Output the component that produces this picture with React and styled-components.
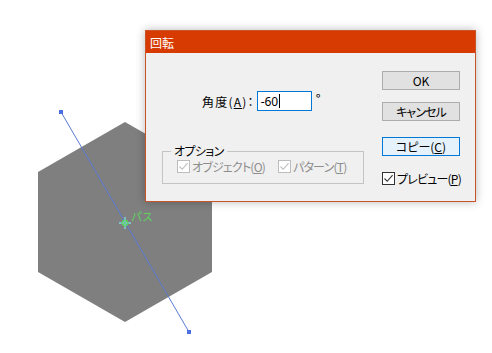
import React from 'react';
import styled, { createGlobalStyle } from 'styled-components';

const GlobalStyle = createGlobalStyle`
  html, body {
    margin: 0;
    padding: 0;
    background: #fff;
  }
`;

const Canvas = styled.div`
  position: relative;
  width: 492px;
  height: 353px;
  overflow: hidden;
  background: #fff;
`;

const Artwork = styled.svg`
  display: block;
`;

const Dialog = styled.div`
  position: absolute;
  left: 145px;
  top: 30px;
  width: 331px;
  height: 172px;
  box-sizing: border-box;
  border: 1px solid #c8552a;
  background: #f0f0f0;
  box-shadow: 0 0 9px rgba(0, 0, 0, 0.28);
  display: flex;
  flex-direction: column;
  font-family: "Noto Sans CJK JP", "Noto Sans", sans-serif;
  font-feature-settings: "palt" 1;
  font-size: 12px;
  color: #000;
`;

const TitleBar = styled.div`
  height: 22px;
  background: #d83b01;
  color: #fff;
  display: flex;
  align-items: center;
  padding-left: 4px;
  font-size: 12px;
`;

const Body = styled.div`
  flex: 1;
  display: grid;
  grid-template-columns: 1fr 78px;
  padding-right: 15px;
`;

const LeftColumn = styled.div`
  display: flex;
  flex-direction: column;
  padding-left: 16px;
  padding-top: 38px;
`;

const AngleRow = styled.div`
  display: flex;
  align-items: center;
  padding-left: 40px;
  height: 20px;
`;

const Label = styled.span`
  margin-right: 2px;
  letter-spacing: 1.2px;
`;

const Input = styled.div`
  width: 55px;
  height: 20px;
  box-sizing: border-box;
  border: 1px solid #0078d7;
  background: #fff;
  display: flex;
  align-items: center;
  padding-left: 3px;
  font-family: "Noto Sans", sans-serif;
`;

const Caret = styled.span`
  display: inline-block;
  width: 1px;
  height: 14px;
  background: #000;
  margin-left: 1px;
`;

const Degree = styled.span`
  margin-left: 4px;
  align-self: flex-start;
  margin-top: 1px;
  font-size: 13px;
  line-height: 14px;
`;

const Group = styled.fieldset`
  margin: 33px 0 0 0;
  min-width: 0;
  width: 202px;
  height: 40px;
  box-sizing: border-box;
  border: 1px solid #c4c4c4;
  padding: 0 0 0 14px;
  display: flex;
  align-items: flex-start;
  gap: 13px;
`;

const Legend = styled.legend`
  padding: 0 3px;
  margin-left: -6px;
  line-height: 14px;
  letter-spacing: -0.6px;
  color: #000;
`;

const RightColumn = styled.div`
  display: flex;
  flex-direction: column;
  padding-top: 18px;
`;

const Button = styled.div`
  height: 19px;
  box-sizing: border-box;
  border: 1px solid ${(p) => (p.$focused ? '#0078d7' : '#adadad')};
  background: ${(p) => (p.$focused ? '#e5f1fb' : '#e1e1e1')};
  display: flex;
  align-items: center;
  justify-content: center;
  margin-top: ${(p) => p.$gap || 0}px;
  font-size: 12px;
  letter-spacing: ${(p) => p.$tight ? '-0.9px' : '0'};
`;

const Check = styled.label`
  display: flex;
  align-items: center;
  gap: 2px;
  white-space: nowrap;
  letter-spacing: -0.8px;
  color: ${(p) => (p.$disabled ? '#8d8d8d' : '#000')};
  margin-top: ${(p) => p.$gap || 0}px;
`;

const Box = styled.span`
  width: 13px;
  height: 13px;
  flex: none;
  box-sizing: border-box;
  border: 1px solid ${(p) => (p.$disabled ? '#bcbcbc' : '#333')};
  background: #fff;
  display: flex;
  align-items: center;
  justify-content: center;
`;

function CheckBox({ disabled, children, gap }) {
  const c = disabled ? '#bcbcbc' : '#333';
  return (
    <Check $disabled={disabled} $gap={gap}>
      <Box $disabled={disabled}>
        <svg width="11" height="11" viewBox="0 0 11 11">
          <path d="M1.5 5.5 L4.2 8.3 L9.6 2.2" fill="none" stroke={c} strokeWidth="1.1" />
        </svg>
      </Box>
      <span>{children}</span>
    </Check>
  );
}

export default function App() {
  return (
    <Canvas>
      <GlobalStyle />
      <Artwork width="492" height="353" viewBox="0 0 492 353">
        <polygon points="125,122 212,172 212,272 125,322 38,272 38,172" fill="#7f7f7f" />
        <line x1="61" y1="112" x2="189" y2="332" stroke="#5a7ad6" strokeWidth="1" />
        <rect x="59" y="110" width="4" height="4" fill="#4a6fe0" />
        <rect x="187" y="330" width="4" height="4" fill="#4a6fe0" />
        <line x1="119" y1="223" x2="131" y2="223" stroke="#7fe8f0" strokeWidth="1.2" />
        <line x1="125" y1="217" x2="125" y2="229" stroke="#7fe8f0" strokeWidth="1.2" />
        <circle cx="125" cy="223" r="3" fill="none" stroke="#58d858" strokeWidth="1" />
        <path d="M123 221 L127 225 M127 221 L123 225" stroke="#58d858" strokeWidth="0.8" />
        <text x="131" y="221" fill="#5cd65c" fontSize="11" fontFamily='"Noto Sans CJK JP", sans-serif'>パス</text>
      </Artwork>
      <Dialog>
        <TitleBar>回転</TitleBar>
        <Body>
          <LeftColumn>
            <AngleRow>
              <Label>角度(<u>A</u>)：</Label>
              <Input>-60<Caret /></Input>
              <Degree>°</Degree>
            </AngleRow>
            <Group>
              <Legend>オプション</Legend>
              <CheckBox disabled>オブジェクト(<u>O</u>)</CheckBox>
              <CheckBox disabled>パターン(<u>T</u>)</CheckBox>
            </Group>
          </LeftColumn>
          <RightColumn>
            <Button>OK</Button>
            <Button $gap={12} $tight>キャンセル</Button>
            <Button $gap={16} $focused>コピー(<u>C</u>)</Button>
            <CheckBox gap={14}>プレビュー(<u>P</u>)</CheckBox>
          </RightColumn>
        </Body>
      </Dialog>
    </Canvas>
  );
}
